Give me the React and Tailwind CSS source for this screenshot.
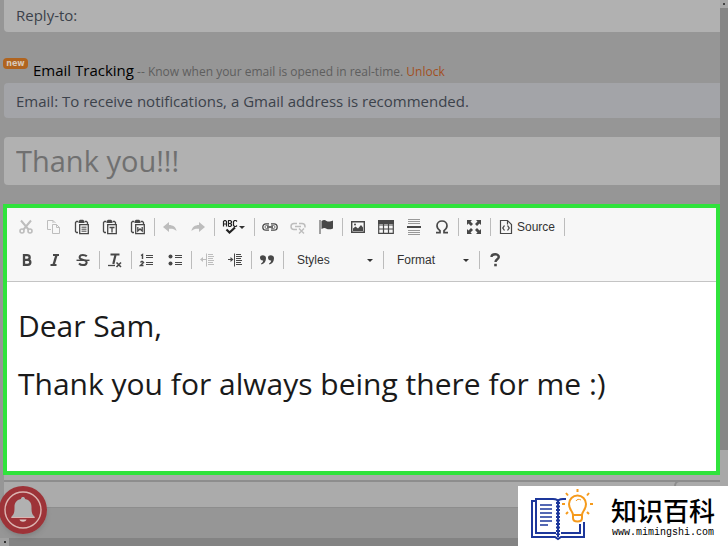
import React from "react";

const DARK = "#484848";
const FAINT = "#bdbdbd";

function Svg({ children, w = 16, color = DARK }) {
  return (
    <svg width={w} height="16" viewBox={`0 0 ${w} 16`} fill="none" stroke={color} strokeWidth="1.4" aria-hidden="true">
      {children}
    </svg>
  );
}

function Clip({ children }) {
  return (
    <Svg>
      <path d="M4 2.5H2.5l-1 1v9l1 1H4M11 2.5h1.5l1 1V5" strokeWidth="1.3" />
      <path d="M4.500 4V2L6 .8h3L10.500 2v2z" fill={DARK} stroke="none" />
      <path d="M5.700 5.700h8.600v9H5.700z" strokeWidth="1.3" />
      {children}
    </Svg>
  );
}

const icons = {
  cut: (
    <Svg color={FAINT}>
      <path d="M3 1.500l7.500 9M13 1.500l-7.500 9" strokeWidth="2" />
      <circle cx="4" cy="12" r="2" strokeWidth="1.6" />
      <circle cx="12" cy="12" r="2" strokeWidth="1.6" />
    </Svg>
  ),
  copy: (
    <Svg color={FAINT}>
      <path d="M5 10.500H1.500v-9H7L9.500 4M7 1.500V4" strokeWidth="1" />
      <path d="M6.500 5.500h4l3 3v6h-7zM10.500 5.500v3h3" strokeWidth="1" />
    </Svg>
  ),
  paste: (
    <Clip>
      <path d="M7.500 8.200h5M7.500 10.200h5M7.500 12.200h5" strokeWidth="1" />
    </Clip>
  ),
  pasteText: (
    <Clip>
      <path d="M7.500 8.500h5M10 8.500v5" strokeWidth="1.3" />
    </Clip>
  ),
  pasteWord: (
    <Clip>
      <path d="M7.800 8v4l2.200-2 2.200 2V8" strokeWidth="1.3" />
    </Clip>
  ),
  undo: (
    <Svg color={FAINT}>
      <path d="M7 3v3c4 0 7 2 7.500 6C12.500 10 10 9.500 7 9.800V13L1 8z" fill={FAINT} stroke="none" />
    </Svg>
  ),
  redo: (
    <Svg color={FAINT}>
      <path d="M9 3v3c-4 0-7 2-7.500 6C3.500 10 6 9.500 9 9.800V13l6-5z" fill={FAINT} stroke="none" />
    </Svg>
  ),
  spell: (
    <Svg w={24} color="#222">
      <path d="M1.500 7.500v-5l1-1h1l1 1v5M1.500 5h3M6.500 7.500v-6h2l1 1v1l-1 1h-2M8.500 4.500l1 1v1l-1 1h-2M15 2.500l-1-1h-1.500l-1 1v4l1 1H14l1-1" strokeWidth="1.200" />
      <path d="M4.500 10.500l3 3L13 8.500" strokeWidth="2.200" />
      <path d="M17 7h6l-3 3z" fill="#333" stroke="none" />
    </Svg>
  ),
  link: (
    <Svg>
      <path d="M7 4.800H4a3.200 3.200 0 000 6.400h3M9 4.800h3a3.200 3.200 0 010 6.400H9" strokeWidth="1.300" />
      <path d="M6.800 6.500H4.500a1.500 1.500 0 000 3h2.300M9.200 6.500h2.300a1.500 1.500 0 010 3H9.200" strokeWidth=".7" />
      <path d="M5 8h6" strokeWidth="1.600" />
    </Svg>
  ),
  unlink: (
    <Svg color={FAINT}>
      <path d="M7 4.500H4a3 3 0 000 6h3M9 4.500h3a3 3 0 013 3v1M5 7.500h6" strokeWidth="1.500" />
      <path d="M9 9.500l5 5M14 9.500l-5 5" strokeWidth="1.400" />
    </Svg>
  ),
  flag: (
    <Svg>
      <path d="M2 1v14" strokeWidth="1" />
      <path d="M3.500 2C6 .5 7 1 8.500 2c1.500.8 3.500 1 6.500-.5v8c-3 1.200-5 1-6.500.2C7 9 6 8.700 3.500 10z" fill={DARK} stroke="none" />
    </Svg>
  ),
  image: (
    <Svg>
      <path d="M1.700 2.700h12.600v10.600H1.700z" />
      <path d="M3 12V9.500l2.500-2 2.500 2L11 6l2 2.500V12z" fill={DARK} stroke="none" />
      <circle cx="5" cy="5.500" r="1" fill={DARK} stroke="none" />
    </Svg>
  ),
  table: (
    <Svg>
      <path d="M.7 1.700h14.600v12.600H.7zM.7 6h14.600M.7 10h14.600M5.500 4v10M10.500 4v10" strokeWidth="1.200" />
      <path d="M0 1h16v4H0z" fill={DARK} stroke="none" />
    </Svg>
  ),
  rule: (
    <Svg>
      <path d="M2 .5h12M2 2.500h12M2 4.500h12M2 11.500h12M2 13.500h12M2 15.500h12" stroke="#999" strokeWidth="1" />
      <path d="M1 8h14" strokeWidth="2" />
    </Svg>
  ),
  omega: (
    <Svg>
      <path d="M2 13.600h4v-2C3.500 10 3 8.500 3 6.800 3 3.800 5.200 2 8 2s5 1.800 5 4.800c0 1.700-.5 3.200-3 4.800v2h4" strokeWidth="1.700" />
    </Svg>
  ),
  maximize: (
    <Svg>
      <path d="M1 1h5L4.500 2.500 7 5 5 7 2.500 4.500 1 6zM15 1v5l-1.500-1.500L11 7 9 5l2.500-2.500L10 1zM1 15v-5l1.500 1.500L5 9l2 2-2.500 2.500L6 15zM15 15h-5l1.500-1.500L9 11l2-2 2.500 2.500L15 10z" fill={DARK} stroke="none" />
    </Svg>
  ),
  source: (
    <Svg w={14}>
      <path d="M1.500 1.500h7l4 4v9h-11zM8.500 1.500v4" strokeWidth="1.200" />
      <path d="M5.500 6.500L3.800 9l1.700 2.500M8.500 6.500L10.200 9l-1.700 2.500" strokeWidth="1.300" />
    </Svg>
  ),
  bold: (
    <Svg>
      <path d="M5 3.200h3.200c3.300 0 3.300 4.600 0 4.600H5h3.600c3.700 0 3.700 5 0 5H5z" strokeWidth="2.300" />
    </Svg>
  ),
  italic: (
    <Svg>
      <path d="M6 3h6M3.500 13h6" strokeWidth="1.800" />
      <path d="M9.500 3l-3 10" strokeWidth="2.400" />
    </Svg>
  ),
  strike: (
    <Svg>
      <path d="M11.800 4.300C10.500 3 9 2.900 7.800 2.900c-4 0-4.200 3.800-.8 4.600l2 .6c4 1 3.200 5-1 5-1.800 0-3-.5-4-1.600" strokeWidth="2" />
      <path d="M1.500 8.300h13" strokeWidth="1.400" />
    </Svg>
  ),
  clear: (
    <Svg>
      <path d="M3.500 2.500h9" strokeWidth="2" />
      <path d="M8.500 3L6.300 12" strokeWidth="2.200" />
      <path d="M1 13.500h7" strokeWidth="1.300" />
      <path d="M9.500 10.500l4.500 4.500M14 10.500L9.500 15" strokeWidth="1.600" />
    </Svg>
  ),
  numbered: (
    <Svg>
      <path d="M2 3.500l1.500-1V7M1.500 10.500l1-1h1l1 1-3 3h3" strokeWidth="1.400" />
      <path d="M7 3.500h7M7 5.500h7M7 10.500h7M7 12.500h7" strokeWidth="1.100" />
    </Svg>
  ),
  bulleted: (
    <Svg>
      <circle cx="3.500" cy="4.500" r="2" fill={DARK} stroke="none" />
      <circle cx="3.500" cy="11.500" r="2" fill={DARK} stroke="none" />
      <path d="M8 3.500h7M8 5.500h7M8 10.500h7M8 12.500h7" strokeWidth="1.100" />
    </Svg>
  ),
  outdent: (
    <Svg color={FAINT}>
      <path d="M7.500 1.500v13M9 2.500h5M9 4.500h6M9 6.500h5M9 8.500h6M9 10.500h5M9 12.500h6M4 7.500h3" strokeWidth="1" />
      <path d="M1 7.500L4 5v5z" fill={FAINT} stroke="none" />
    </Svg>
  ),
  indent: (
    <Svg>
      <path d="M7.500 1.500v13M9 2.500h5M9 4.500h6M9 6.500h5M9 8.500h6M9 10.500h5M9 12.500h6M1 7.500h3" strokeWidth="1" />
      <path d="M6.500 7.500L3.500 5v5z" fill={DARK} stroke="none" />
    </Svg>
  ),
  quote: (
    <Svg>
      <path d="M1 5.500C1 2.500 7 2.500 7 6c0 3.500-1.500 5.500-4.500 6.500l-.5-1c1.300-.6 2-1.700 2.200-3C2.300 8.700 1 7.500 1 5.500zM9 5.500C9 2.500 15 2.500 15 6c0 3.500-1.500 5.500-4.500 6.500l-.5-1c1.300-.6 2-1.700 2.200-3C10.300 8.700 9 7.500 9 5.500z" fill={DARK} stroke="none" />
    </Svg>
  ),
  help: (
    <Svg>
      <path d="M4.500 5c0-3.600 7.300-3.600 7.300 0 0 2.200-3.300 2.300-3.300 5" strokeWidth="2.400" />
      <path d="M7.200 11.800h2.600v2.500H7.200z" fill={DARK} stroke="none" />
    </Svg>
  ),
};

function Tool({ name, label, wide }) {
  return (
    <button type="button" aria-label={label} className={`flex h-7 items-center justify-center ${wide ? "w-9" : "w-7"}`}>
      {icons[name]}
    </button>
  );
}

function Sep() {
  return (
    <span className="flex w-1 justify-center">
      <span className="h-[18px] w-px bg-[#bcbcbc]" />
    </span>
  );
}

function Combo({ label, width }) {
  return (
    <span className={`relative flex h-7 items-center ${width}`}>
      <select aria-label={label} className="w-full appearance-none bg-transparent pl-3 font-['Liberation_Sans',sans-serif] text-[12px] text-[#333]">
        <option>{label}</option>
      </select>
      <svg width="6" height="3" viewBox="0 0 6 3" className="pointer-events-none absolute right-2" aria-hidden="true">
        <path d="M0 0h6L3 3z" fill="#333" />
      </svg>
    </span>
  );
}

function Toolbar() {
  return (
    <div role="toolbar" aria-label="Editor toolbar" className="border-b border-[#c4c4c4] bg-[#f7f7f7] pt-0.5 pr-2 pb-[5px] pl-[5px]">
      <div className="flex h-[34px] items-center">
        <Tool name="cut" label="Cut" />
        <Tool name="copy" label="Copy" />
        <Tool name="paste" label="Paste" />
        <Tool name="pasteText" label="Paste as plain text" />
        <Tool name="pasteWord" label="Paste from Word" />
        <Sep />
        <Tool name="undo" label="Undo" />
        <Tool name="redo" label="Redo" />
        <Sep />
        <Tool name="spell" label="Spell check" wide />
        <Sep />
        <Tool name="link" label="Link" />
        <Tool name="unlink" label="Unlink" />
        <Tool name="flag" label="Anchor" />
        <Sep />
        <Tool name="image" label="Image" />
        <Tool name="table" label="Table" />
        <Tool name="rule" label="Insert horizontal line" />
        <Tool name="omega" label="Insert special character" />
        <Sep />
        <Tool name="maximize" label="Maximize" />
        <Sep />
        <button type="button" className="flex h-7 w-[70px] items-center justify-center gap-1 font-['Liberation_Sans',sans-serif] text-[12px] text-[#333]">
          {icons.source}
          Source
        </button>
        <Sep />
      </div>
      <div className="flex h-8 items-center pl-px">
        <Tool name="bold" label="Bold" />
        <Tool name="italic" label="Italic" />
        <Tool name="strike" label="Strikethrough" />
        <Sep />
        <Tool name="clear" label="Remove format" />
        <Sep />
        <Tool name="numbered" label="Numbered list" />
        <Tool name="bulleted" label="Bulleted list" />
        <Sep />
        <Tool name="outdent" label="Decrease indent" />
        <Tool name="indent" label="Increase indent" />
        <Sep />
        <Tool name="quote" label="Block quote" />
        <Sep />
        <Combo label="Styles" width="w-24" />
        <Sep />
        <Combo label="Format" width="w-[92px]" />
        <Sep />
        <Tool name="help" label="About" />
      </div>
    </div>
  );
}

function Bell() {
  return (
    <button type="button" aria-label="Notifications" className="absolute bottom-3 left-0 rounded-full shadow-md">
      <svg width="48" height="48" viewBox="0 0 48 48" className="-ml-px block" aria-hidden="true">
        <circle cx="24" cy="24" r="24" fill="#9d3338" />
        <circle cx="24" cy="24" r="18" fill="none" stroke="#dcb4b1" strokeWidth="1.400" />
        <path d="M22 13c0-2.600 4-2.600 4 0 4.800 1 6.500 4 6.500 8 0 6 .5 7 3 9.500V32h-23v-1.500c2.500-2.500 3-3.500 3-9.500 0-4 1.700-7 6.500-8z" fill="#b1b1b1" />
        <path d="M20.500 33.500h7c-.8 3-6.200 3-7 0z" fill="#dcc4c2" />
        <path d="M12.500 31.500h23" stroke="#dcb4b1" strokeWidth="1" />
      </svg>
    </button>
  );
}

function Brand() {
  return (
    <div className="absolute right-0 bottom-0 flex h-[60px] w-[210px] items-center bg-white pl-3">
      <svg width="68" height="54" viewBox="0 0 68 54" fill="none" aria-hidden="true">
        <g stroke="#1d379b" strokeWidth="2">
          <path d="M5 12H2v36h23l3 2 3-2h23V33" />
          <path d="M26 44H6V10h17c3 0 5 1 5 3v35M31 44h19V35M28 13c0-2 2-3 5-3h3" />
          <path d="M10 16h12M10 20h12M10 24h12M10 28h12M10 32h12M10 36h8" strokeWidth="1.500" />
          <path d="M28 13v33" strokeWidth="4" strokeDasharray="2 1.500" />
        </g>
        <g stroke="#f59a1c" strokeWidth="2">
          <path d="M43 26c0-4-4-5-4-11a8.500 8.500 0 0117 0c0 6-4 7-4 11zM43 26v3c0 3 2 3.500 4.500 3.500S52 32 52 29v-3" />
          <path d="M47.500 0v3M36 4l2 2.500M59 4l-2 2.500M32 15h3M60 15h3M36 25l2-2M59 25l-2-2" />
          <path d="M46 12c1-2 3-2 5-1" strokeWidth="1" />
        </g>
      </svg>
      <div className="flex flex-col items-center pl-[13px]">
        <span className="font-['Noto_Sans_CJK_SC',sans-serif] text-[26px] leading-[34px] font-medium text-black">知识百科</span>
        <span className="font-['Liberation_Mono',monospace] text-[10px] leading-3 text-black">www.mimingshi.com</span>
      </div>
    </div>
  );
}

export default function App() {
  return (
    <div className="relative flex min-h-screen flex-col overflow-hidden bg-[#969696] font-['Open_Sans','Noto_Sans',sans-serif]">
      <div className="flex flex-1">
        <main className="flex min-w-0 flex-1 flex-col">
          <input
            aria-label="Reply-to"
            placeholder="Reply-to:"
            className="ml-1 h-8 rounded-bl-sm bg-[#b1b1b1] px-3 pb-0.5 text-[15px] text-[#3c424b] placeholder:text-[#3c424b]"
          />
          <div className="mt-[25px] flex h-[26px] pl-[3px]">
            <span className="mt-px flex h-[11px] w-[25px] items-center justify-center rounded-sm bg-[#b0641f] font-['DejaVu_Sans',sans-serif] text-[8px] font-bold text-[#d8c8b8]">
              new
            </span>
            <p className="pt-[3px] pl-[5px] text-[12px] leading-5 whitespace-nowrap text-[#5e5e5e]">
              <label htmlFor="tracking" className="text-[15px] text-black">Email Tracking</label>
              {" -- Know when your email is opened in real-time. "}
              <a href="#unlock" className="text-[#a2501f]">Unlock</a>
            </p>
          </div>
          <input
            id="tracking"
            defaultValue="Email: To receive notifications, a Gmail address is recommended."
            className="ml-1 h-[35px] rounded-l-sm bg-[#a3a4a8] px-3 text-[15px] text-[#3c424b]"
          />
          <input
            aria-label="Subject"
            defaultValue="Thank you!!!"
            className="mt-[19px] ml-1 h-12 rounded-l-sm bg-[#b1b1b1] px-3 pb-0.5 text-[29px] text-[#707070]"
          />
          <section aria-label="Message" className="mt-[19px] ml-[3px] border-4 border-[#30e33c] bg-white">
            <Toolbar />
            <div
              role="textbox"
              aria-label="Message body"
              aria-multiline="true"
              contentEditable
              suppressContentEditableWarning
              className="min-h-[189px] px-[11px] pt-[19px] text-[30px] leading-[50px] text-[#1a1a1a]"
            >
              <p>Dear Sam,</p>
              <p className="mt-2">Thank you for always being there for me :)</p>
            </div>
          </section>
          <div className="ml-1 flex h-[33px] flex-col bg-[#ababab] pt-[5px]">
            <div className="flex flex-1 justify-end border-t-2 border-b border-t-[#8d8d8d] border-b-[#8d8d8d]">
              <span className="-mt-0.5 w-[46px] rounded-tl-md border-t-2 border-l-2 border-[#8d8d8d] bg-[#ababab]" />
            </div>
          </div>
        </main>
        <div className="flex w-2 flex-col bg-[#a8a8a8]">
          <span className="flex h-2 items-center justify-center">
            <span className="size-[2px] bg-[#444]" />
          </span>
          <span className="h-[442px] bg-[#868686]" />
        </div>
      </div>
      <div className="flex h-2 bg-[#838383]">
        <span className="flex w-[9px] items-center justify-center bg-[#a0a0a0]">
          <span className="size-[2px] bg-[#333]" />
        </span>
      </div>
      <Bell />
      <Brand />
    </div>
  );
}
